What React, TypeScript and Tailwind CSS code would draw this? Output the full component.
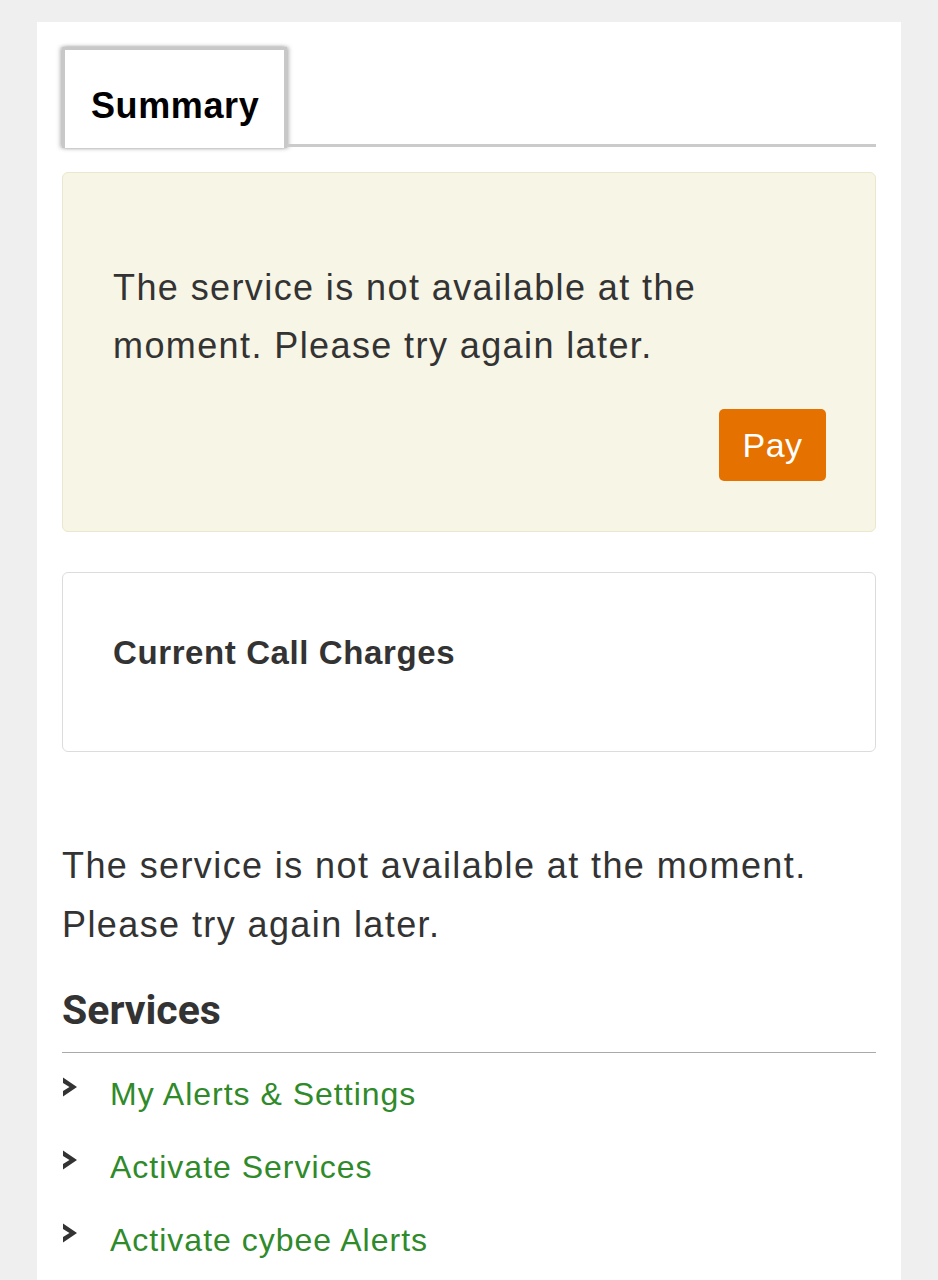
const services = ["My Alerts & Settings", "Activate Services", "Activate cybee Alerts"];

function Chevron() {
  return (
    <svg width="18" height="22" viewBox="0 0 18 22" className="block h-[22px] w-[18px] shrink-0">
      <path d="M1 1.5 L15 11 L1 20.5 L1 15 L7.5 11 L1 7 Z" fill="#333" />
    </svg>
  );
}

export default function App() {
  return (
    <div className="min-h-[1280px] bg-[#efefef] pt-[22px] font-['Liberation_Sans',Arial,sans-serif] text-[#333]">
      <div className="ml-[37px] w-[864px] min-h-[1258px] bg-white px-[25px] pt-[25px]">
        {/* tabs */}
        <div className="flex items-end">
          <div className="flex h-[101px] w-[225px] items-center border-[3px] border-b-0 border-[#c8c8c8] bg-white pl-[26px] pt-[14px] shadow-[-2px_0_4px_rgba(0,0,0,0.25),2px_0_4px_rgba(0,0,0,0.25)]">
            <span className="text-[36px] font-semibold tracking-[0.6px] text-black">Summary</span>
          </div>
          <div className="mb-[1px] h-[3px] flex-1 bg-[#cbcbcb]" />
        </div>

        {/* alert */}
        <div className="mt-[24px] h-[360px] rounded-[6px] border border-[#ebe7cc] bg-[#f7f5e5] px-[50px] pt-[86px]">
          <p className="text-[36px] leading-[58px] tracking-[1.4px] text-[#333]">
            The service is not available at the moment. Please try again later.
          </p>
          <div className="-mr-[1px] mt-[34px] flex justify-end">
            <button className="h-[72px] w-[107px] rounded-[5px] bg-[#e57200] text-[34px] tracking-[0.5px] text-white">Pay</button>
          </div>
        </div>

        {/* current call charges */}
        <div className="mt-[40px] flex h-[180px] items-center rounded-[6px] border border-[#dcdcdc] px-[50px] pb-[18px]">
          <h3 className="text-[33px] font-bold tracking-[0.6px] text-[#333]">Current Call Charges</h3>
        </div>

        <p className="mt-[84px] text-[36px] leading-[59px] tracking-[1.4px] text-[#333]">
          The service is not available at the moment. Please try again later.
        </p>

        <h2 className="mt-[32px] font-['Roboto',sans-serif] text-[41px] font-bold leading-[48px] text-[#333]">Services</h2>
        <div className="mt-[18px] h-px bg-[#aaa]" />

        <ul className="mt-[4px] flex flex-col">
          {services.map((s) => (
            <li key={s} className="flex h-[73px] items-center">
              <div className="-mt-[14px] w-[48px]">
                <Chevron />
              </div>
              <a className="text-[32px] tracking-[1px] text-[#2f8a2a]">{s}</a>
            </li>
          ))}
        </ul>
      </div>
    </div>
  );
}
